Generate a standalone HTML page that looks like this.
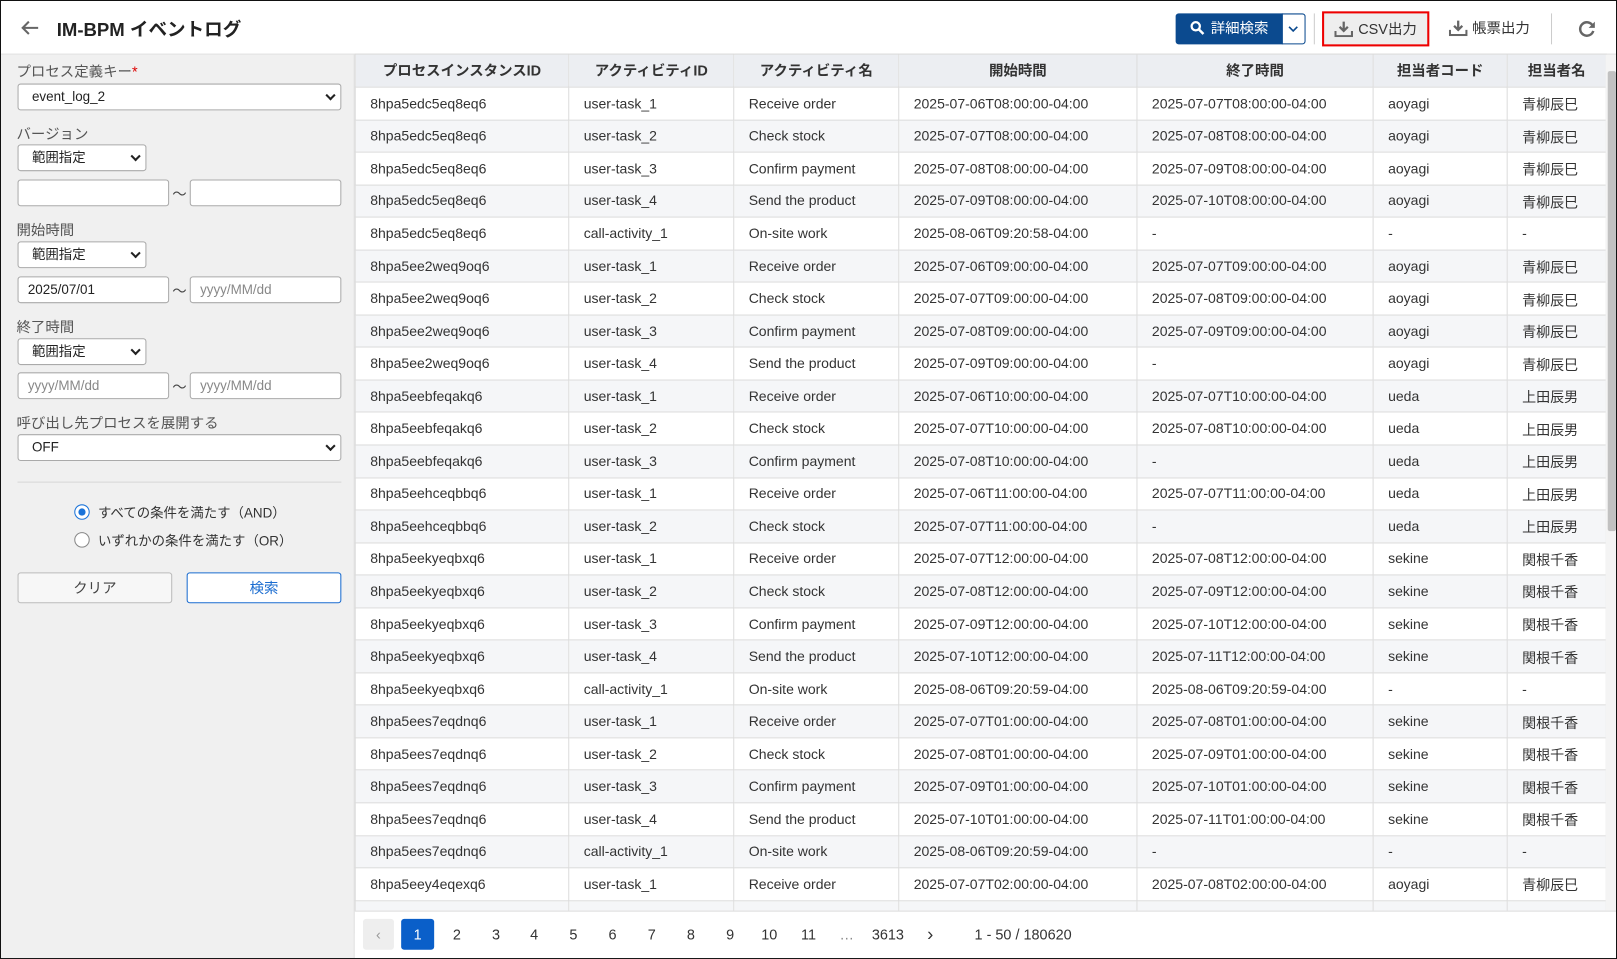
<!DOCTYPE html>
<html><head><meta charset="utf-8">
<style>
*{box-sizing:border-box;margin:0;padding:0}
html,body{width:1617px;height:959px;overflow:hidden;background:#fff}
body{font-family:"Liberation Sans","Noto Sans CJK JP",sans-serif;color:#333;font-size:14px}
#w{position:absolute;left:0;top:0;width:1568px;height:930px;transform:scale(1.03125);transform-origin:0 0;border:1px solid #111;background:#fff;overflow:hidden}
.a{position:absolute}
.hdr{left:0;top:0;width:1568px;height:52px;border-bottom:1px solid #ddd;background:#fff}
.title{left:54px;top:14px;font-size:18px;font-weight:bold;color:#222}
.left{left:0;top:52px;width:343px;height:878px;background:#f0f0f0;border-right:1px solid #ddd}
.lbl{position:absolute;left:15px;font-size:14px;color:#555;line-height:16px}
.sel,.inp{position:absolute;height:26px;border:1px solid #aaa;border-radius:3px;background:#fff;font-size:13px;line-height:24px;padding-left:13px;color:#222}
.sel:after{content:"";position:absolute;right:6px;top:7px;width:5px;height:5px;border-right:2px solid #222;border-bottom:2px solid #222;transform:rotate(45deg)}
.ph{color:#888;padding-left:9px}
.tl{position:absolute;left:166px;font-size:14px;color:#444}
table{border-collapse:collapse;table-layout:fixed;position:absolute;left:343px;top:51px;width:1213px}
td,th{border:1px solid #dcdcdc;height:31.56px;padding:0 0 0 14px;font-size:13.6px;white-space:nowrap;overflow:hidden;text-align:left;font-weight:normal;color:#333}
th{height:32px;background:#eceef2;font-weight:bold;text-align:center;padding:0 0 2px;color:#333;font-size:14px}
tr:nth-child(odd) td{background:#f5f6f8}
.pg{position:absolute;top:890px;height:30px;width:32px;text-align:center;line-height:30px;font-size:14px;color:#333}
.btn{position:absolute;height:30px;border-radius:3px;font-size:14px;line-height:28px;text-align:center}
</style></head><body>
<div id="w">
<div class="a hdr">
 <svg class="a" style="left:19px;top:18px" width="18" height="16" viewBox="0 0 18 16"><path d="M17 8H2M8 2L2 8l6 6" stroke="#666" stroke-width="2" fill="none"/></svg>
 <div class="a title">IM-BPM イベントログ</div>
 <div class="btn" style="left:1139px;top:12px;width:104px;background:#0b4a8f;color:#fff;border-radius:3px 0 0 3px">
  <svg style="vertical-align:-2px;margin-right:6px" width="14" height="14" viewBox="0 0 14 14"><circle cx="5.5" cy="5.5" r="4" stroke="#fff" stroke-width="2.2" fill="none"/><path d="M8.5 8.5L13 13" stroke="#fff" stroke-width="2.4"/></svg>詳細検索</div>
 <div class="btn" style="left:1242px;top:12px;width:23px;border:1px solid #0b4a8f;border-radius:0 3px 3px 0;background:#fff">
  <svg width="10" height="8" viewBox="0 0 10 8" style="margin-top:10px;display:block;margin-left:5px"><path d="M1 2l4 4 4-4" stroke="#0b4a8f" stroke-width="1.6" fill="none"/></svg></div>
 <div class="a" style="left:1273px;top:12px;width:1px;height:30px;background:#ccc"></div>
 <div class="btn" style="left:1281px;top:10px;width:104px;height:34px;border:2px solid #e00;background:#eee;border-radius:0;line-height:30px;color:#333">
  <svg style="vertical-align:-3px;margin-right:5px" width="18" height="16" viewBox="0 0 18 16"><path d="M9 1v8M5 6l4 4 4-4" stroke="#666" stroke-width="2.2" fill="none"/><path d="M1 10v5h16v-5" stroke="#666" stroke-width="2" fill="none"/></svg>CSV出力</div>
 <div class="btn" style="left:1400px;top:12px;width:86px;color:#333">
  <svg style="vertical-align:-3px;margin-right:5px" width="18" height="16" viewBox="0 0 18 16"><path d="M9 1v8M5 6l4 4 4-4" stroke="#666" stroke-width="2.2" fill="none"/><path d="M1 10v5h16v-5" stroke="#666" stroke-width="2" fill="none"/></svg>帳票出力</div>
 <div class="a" style="left:1503px;top:12px;width:1px;height:30px;background:#ccc"></div>
 <svg class="a" style="left:1529px;top:18px" width="18" height="18" viewBox="0 0 18 18"><path d="M14.5 6A6.5 6.5 0 1 0 15 11" stroke="#666" stroke-width="2.4" fill="none"/><path d="M16.5 2v6h-6z" fill="#666"/></svg>
</div>
<div class="a left">
 <div class="lbl" style="top:8px">プロセス定義キー<span style="color:#d00">*</span></div>
 <div class="sel" style="left:16px;top:28px;width:314px">event_log_2</div>
 <div class="lbl" style="top:69px">バージョン</div>
 <div class="sel" style="left:16px;top:87px;width:125px">範囲指定</div>
 <div class="inp" style="left:16px;top:121px;width:147px"></div><div class="tl" style="top:125px">〜</div><div class="inp" style="left:183px;top:121px;width:147px"></div>
 <div class="lbl" style="top:162px">開始時間</div>
 <div class="sel" style="left:16px;top:181px;width:125px">範囲指定</div>
 <div class="inp" style="left:16px;top:215px;width:147px;padding-left:9px">2025/07/01</div><div class="tl" style="top:219px">〜</div><div class="inp ph" style="left:183px;top:215px;width:147px">yyyy/MM/dd</div>
 <div class="lbl" style="top:256px">終了時間</div>
 <div class="sel" style="left:16px;top:275px;width:125px">範囲指定</div>
 <div class="inp ph" style="left:16px;top:308px;width:147px">yyyy/MM/dd</div><div class="tl" style="top:312px">〜</div><div class="inp ph" style="left:183px;top:308px;width:147px">yyyy/MM/dd</div>
 <div class="lbl" style="top:349px">呼び出し先プロセスを展開する</div>
 <div class="sel" style="left:16px;top:368px;width:314px">OFF</div>
 <div class="a" style="left:16px;top:414px;width:314px;height:1px;background:#d6d6d6"></div>
 <div class="a" style="left:71px;top:436px;width:15px;height:15px;border-radius:50%;border:1px solid #1a73d9;background:#fff"><div style="margin:3px;width:7px;height:7px;border-radius:50%;background:#1a73d9"></div></div>
 <div class="a" style="left:94px;top:434px;font-size:13px;color:#333">すべての条件を満たす（AND）</div>
 <div class="a" style="left:71px;top:463px;width:15px;height:15px;border-radius:50%;border:1px solid #888;background:#fff"></div>
 <div class="a" style="left:94px;top:461px;font-size:13px;color:#333">いずれかの条件を満たす（OR）</div>
 <div class="btn" style="left:16px;top:502px;width:150px;border:1px solid #bbb;background:#f7f7f7;color:#444">クリア</div>
 <div class="btn" style="left:180px;top:502px;width:150px;border:1px solid #1a6cd0;background:#fff;color:#1a6cd0">検索</div>
</div>
<table>
<colgroup><col style="width:207px"><col style="width:160px"><col style="width:160px"><col style="width:231px"><col style="width:229px"><col style="width:130px"><col style="width:96px"></colgroup>
<tr><th>プロセスインスタンスID</th><th>アクティビティID</th><th>アクティビティ名</th><th>開始時間</th><th>終了時間</th><th>担当者コード</th><th>担当者名</th></tr>
<tr><td>8hpa5edc5eq8eq6</td><td>user-task_1</td><td>Receive order</td><td>2025-07-06T08:00:00-04:00</td><td>2025-07-07T08:00:00-04:00</td><td>aoyagi</td><td>青柳辰巳</td></tr>
<tr><td>8hpa5edc5eq8eq6</td><td>user-task_2</td><td>Check stock</td><td>2025-07-07T08:00:00-04:00</td><td>2025-07-08T08:00:00-04:00</td><td>aoyagi</td><td>青柳辰巳</td></tr>
<tr><td>8hpa5edc5eq8eq6</td><td>user-task_3</td><td>Confirm payment</td><td>2025-07-08T08:00:00-04:00</td><td>2025-07-09T08:00:00-04:00</td><td>aoyagi</td><td>青柳辰巳</td></tr>
<tr><td>8hpa5edc5eq8eq6</td><td>user-task_4</td><td>Send the product</td><td>2025-07-09T08:00:00-04:00</td><td>2025-07-10T08:00:00-04:00</td><td>aoyagi</td><td>青柳辰巳</td></tr>
<tr><td>8hpa5edc5eq8eq6</td><td>call-activity_1</td><td>On-site work</td><td>2025-08-06T09:20:58-04:00</td><td>-</td><td>-</td><td>-</td></tr>
<tr><td>8hpa5ee2weq9oq6</td><td>user-task_1</td><td>Receive order</td><td>2025-07-06T09:00:00-04:00</td><td>2025-07-07T09:00:00-04:00</td><td>aoyagi</td><td>青柳辰巳</td></tr>
<tr><td>8hpa5ee2weq9oq6</td><td>user-task_2</td><td>Check stock</td><td>2025-07-07T09:00:00-04:00</td><td>2025-07-08T09:00:00-04:00</td><td>aoyagi</td><td>青柳辰巳</td></tr>
<tr><td>8hpa5ee2weq9oq6</td><td>user-task_3</td><td>Confirm payment</td><td>2025-07-08T09:00:00-04:00</td><td>2025-07-09T09:00:00-04:00</td><td>aoyagi</td><td>青柳辰巳</td></tr>
<tr><td>8hpa5ee2weq9oq6</td><td>user-task_4</td><td>Send the product</td><td>2025-07-09T09:00:00-04:00</td><td>-</td><td>aoyagi</td><td>青柳辰巳</td></tr>
<tr><td>8hpa5eebfeqakq6</td><td>user-task_1</td><td>Receive order</td><td>2025-07-06T10:00:00-04:00</td><td>2025-07-07T10:00:00-04:00</td><td>ueda</td><td>上田辰男</td></tr>
<tr><td>8hpa5eebfeqakq6</td><td>user-task_2</td><td>Check stock</td><td>2025-07-07T10:00:00-04:00</td><td>2025-07-08T10:00:00-04:00</td><td>ueda</td><td>上田辰男</td></tr>
<tr><td>8hpa5eebfeqakq6</td><td>user-task_3</td><td>Confirm payment</td><td>2025-07-08T10:00:00-04:00</td><td>-</td><td>ueda</td><td>上田辰男</td></tr>
<tr><td>8hpa5eehceqbbq6</td><td>user-task_1</td><td>Receive order</td><td>2025-07-06T11:00:00-04:00</td><td>2025-07-07T11:00:00-04:00</td><td>ueda</td><td>上田辰男</td></tr>
<tr><td>8hpa5eehceqbbq6</td><td>user-task_2</td><td>Check stock</td><td>2025-07-07T11:00:00-04:00</td><td>-</td><td>ueda</td><td>上田辰男</td></tr>
<tr><td>8hpa5eekyeqbxq6</td><td>user-task_1</td><td>Receive order</td><td>2025-07-07T12:00:00-04:00</td><td>2025-07-08T12:00:00-04:00</td><td>sekine</td><td>関根千香</td></tr>
<tr><td>8hpa5eekyeqbxq6</td><td>user-task_2</td><td>Check stock</td><td>2025-07-08T12:00:00-04:00</td><td>2025-07-09T12:00:00-04:00</td><td>sekine</td><td>関根千香</td></tr>
<tr><td>8hpa5eekyeqbxq6</td><td>user-task_3</td><td>Confirm payment</td><td>2025-07-09T12:00:00-04:00</td><td>2025-07-10T12:00:00-04:00</td><td>sekine</td><td>関根千香</td></tr>
<tr><td>8hpa5eekyeqbxq6</td><td>user-task_4</td><td>Send the product</td><td>2025-07-10T12:00:00-04:00</td><td>2025-07-11T12:00:00-04:00</td><td>sekine</td><td>関根千香</td></tr>
<tr><td>8hpa5eekyeqbxq6</td><td>call-activity_1</td><td>On-site work</td><td>2025-08-06T09:20:59-04:00</td><td>2025-08-06T09:20:59-04:00</td><td>-</td><td>-</td></tr>
<tr><td>8hpa5ees7eqdnq6</td><td>user-task_1</td><td>Receive order</td><td>2025-07-07T01:00:00-04:00</td><td>2025-07-08T01:00:00-04:00</td><td>sekine</td><td>関根千香</td></tr>
<tr><td>8hpa5ees7eqdnq6</td><td>user-task_2</td><td>Check stock</td><td>2025-07-08T01:00:00-04:00</td><td>2025-07-09T01:00:00-04:00</td><td>sekine</td><td>関根千香</td></tr>
<tr><td>8hpa5ees7eqdnq6</td><td>user-task_3</td><td>Confirm payment</td><td>2025-07-09T01:00:00-04:00</td><td>2025-07-10T01:00:00-04:00</td><td>sekine</td><td>関根千香</td></tr>
<tr><td>8hpa5ees7eqdnq6</td><td>user-task_4</td><td>Send the product</td><td>2025-07-10T01:00:00-04:00</td><td>2025-07-11T01:00:00-04:00</td><td>sekine</td><td>関根千香</td></tr>
<tr><td>8hpa5ees7eqdnq6</td><td>call-activity_1</td><td>On-site work</td><td>2025-08-06T09:20:59-04:00</td><td>-</td><td>-</td><td>-</td></tr>
<tr><td>8hpa5eey4eqexq6</td><td>user-task_1</td><td>Receive order</td><td>2025-07-07T02:00:00-04:00</td><td>2025-07-08T02:00:00-04:00</td><td>aoyagi</td><td>青柳辰巳</td></tr>
<tr><td></td><td></td><td></td><td></td><td></td><td></td><td></td></tr>
</table>
<div class="a" style="left:343px;top:882px;width:1225px;height:48px;background:#fff;border-top:1px solid #dcdcdc"></div>
<div class="a" style="left:1556px;top:52px;width:12px;height:830px;background:#f4f4f4"></div>
<div class="a" style="left:1558px;top:68px;width:8px;height:446px;background:#c1c1c1;border-radius:2px"></div>
<div class="pg" style="left:351px;width:30px;background:#eee;border-radius:3px;color:#999">&#8249;</div>
<div class="pg" style="left:388px;background:#0a5fc9;color:#fff;border-radius:3px">1</div>
<div class="pg" style="left:426px">2</div><div class="pg" style="left:464px">3</div><div class="pg" style="left:501px">4</div><div class="pg" style="left:539px">5</div><div class="pg" style="left:577px">6</div><div class="pg" style="left:615px">7</div><div class="pg" style="left:653px">8</div><div class="pg" style="left:691px">9</div><div class="pg" style="left:729px">10</div><div class="pg" style="left:767px">11</div><div class="pg" style="left:804px;color:#888">…</div><div class="pg" style="left:840px;width:40px">3613</div><div class="pg" style="left:885px;font-size:18px">&#8250;</div>
<div class="a" style="left:944px;top:897px;font-size:14px;color:#333">1 - 50 / 180620</div>
</div>
</body></html>
